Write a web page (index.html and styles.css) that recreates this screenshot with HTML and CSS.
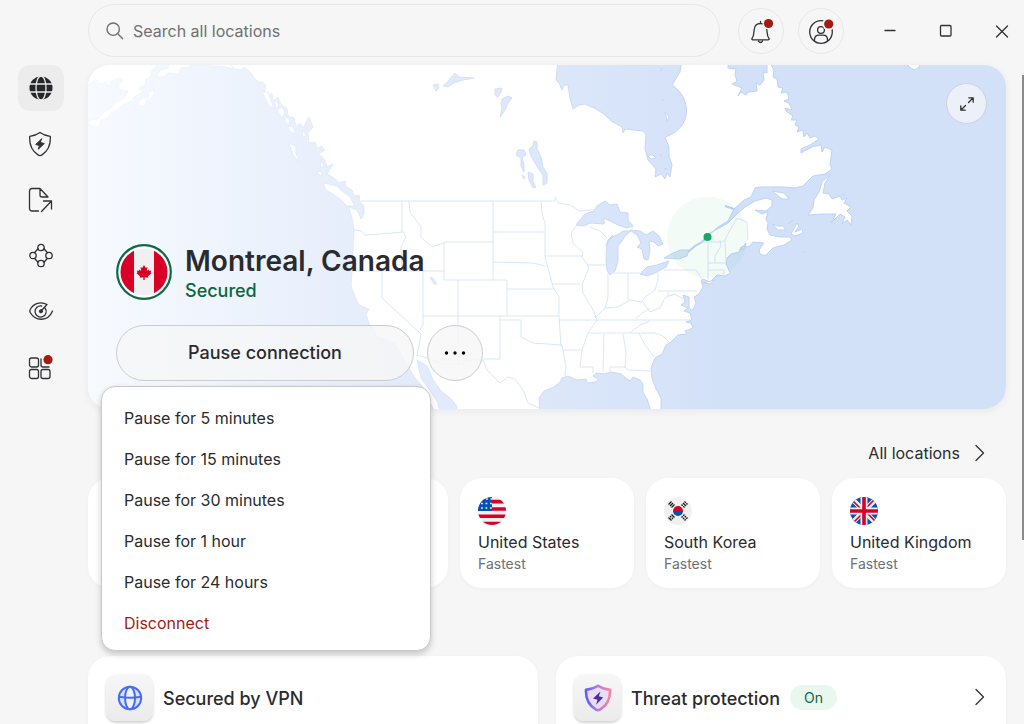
FILE: index.html
```html
<!DOCTYPE html>
<html lang="en">
<head>
  <meta charset="utf-8" />
  <meta name="viewport" content="width=device-width, initial-scale=1" />
  <title>VPN</title>
  <link rel="stylesheet" href="styles.css">
</head>
<body>
<div class="app">
<header class="topbar">
  <label class="search">
    <svg class="search-icon" width="18" height="18" viewBox="0 0 18 18"><circle cx="7.2" cy="7.2" r="6.2" /><path d="M11.8 11.8L17 17" /></svg>
    <input class="search-input" type="search" placeholder="Search all locations" aria-label="Search all locations" />
  </label>
  <div class="topbar-actions">
    <button class="round-button" type="button" aria-label="Notifications">
      <svg class="icon" width="26" height="26" viewBox="0 0 26 26">
        <path d="M12.5 3.5v2M4 20.5c2-2.5 1.8-5 2.2-9C6.600 7.500 9 5.500 12.500 5.500s5.900 2 6.300 6c.4 4 .2 6.500 2.200 9 .5.800 0 1.300-1 1.300H5c-1 0-1.500-.5-1-1.300zM10.500 23.200c1 1.700 3 1.700 4 0" />
        <circle class="icon-halo" cx="20.500" cy="5.500" r="6" />
        <circle class="icon-dot" cx="20.500" cy="5.500" r="4.600" />
      </svg>
    </button>
    <button class="round-button" type="button" aria-label="Account">
      <svg class="icon" width="26" height="26" viewBox="0 0 26 26">
        <circle cx="13" cy="14" r="11.300" /><circle cx="13" cy="12" r="3.400" />
        <path d="M6.500 22.800v-1c0-3 2-4.600 4.500-4.600h4c2.500 0 4.500 1.600 4.500 4.600v1" />
        <circle class="icon-halo" cx="20.700" cy="6" r="6.400" />
        <circle class="icon-dot" cx="20.700" cy="6" r="4.600" />
      </svg>
    </button>
  </div>
  <div class="window-controls">
    <button class="window-button" type="button" aria-label="Minimize"><svg class="icon" width="14" height="14" viewBox="0 0 14 14"><path d="M2 6.500h10" /></svg></button>
    <button class="window-button" type="button" aria-label="Maximize"><svg class="icon" width="14" height="14" viewBox="0 0 14 14"><rect x="1.500" y="1.500" width="10.500" height="10.500" rx="1" /></svg></button>
    <button class="window-button" type="button" aria-label="Close"><svg class="icon" width="14" height="14" viewBox="0 0 14 14"><path d="M1.500 2L12.500 13M12.500 2L1.500 13" /></svg></button>
  </div>
</header>

<nav class="sidebar">
  <a class="nav-link nav-link--active" href="#" aria-label="VPN">
    <svg class="icon" width="26" height="26" viewBox="0 0 26 26">
      <circle class="globe-fill" cx="13" cy="13" r="11.500" />
      <g class="globe-lines"><ellipse cx="13" cy="13" rx="5" ry="12" /><path d="M1 9h24M1 17h24" /></g>
    </svg>
  </a>
  <a class="nav-link" href="#" aria-label="Threat protection">
    <svg class="icon" width="26" height="26" viewBox="0 0 26 26">
      <path d="M12 1.500c3 2.200 6.500 3.400 10.300 3.800.5 8.300-2 14.600-8.300 18.600-1.500 1-2.500 1-4 0C3.700 19.900 1.200 13.600 1.700 5.300 5.500 4.900 9 3.700 12 1.500z" />
      <path class="icon-solid" d="M13.500 8l-5.800 5.500 3.800 1-1.200 3.700 6-5.700-3.900-1z" />
    </svg>
  </a>
  <a class="nav-link" href="#" aria-label="File sharing">
    <svg class="icon" width="26" height="26" viewBox="0 0 26 26">
      <path d="M10.500 24H4c-1.500 0-2.500-1-2.500-2.500V4c0-1.500 1-2.500 2.500-2.500h8L20 10h-6c-1.200 0-2-.8-2-2V1.500M13.500 24.500L23.500 14M15.500 14h8v8" />
    </svg>
  </a>
  <a class="nav-link" href="#" aria-label="Meshnet">
    <svg class="icon" width="26" height="26" viewBox="0 0 26 26">
      <circle cx="13" cy="4.500" r="3.200" /><circle cx="13" cy="20.500" r="3.200" /><circle cx="5" cy="12.500" r="3.200" /><circle cx="21" cy="12.500" r="3.200" />
      <path d="M10 5.800L6.700 9.500M16 5.800l3.300 3.700M10 19.200l-3.300-3.700M16 19.200l3.300-3.700" />
    </svg>
  </a>
  <a class="nav-link" href="#" aria-label="Dark web monitor">
    <svg class="icon" width="26" height="26" viewBox="0 0 26 26">
      <path d="M19 5.500C12.500 2 5.500 4.500 2.200 10.500c-.6 1-.6 2 0 3C7.500 22.500 20 23 24.500 12M19 5.500l-5.500 6M17 9a5.600 5.600 0 1 1-3.300-2" />
      <circle class="icon-solid" cx="13" cy="12.300" r="1.600" />
    </svg>
  </a>
  <a class="nav-link" href="#" aria-label="All products">
    <svg class="icon" width="26" height="26" viewBox="0 0 26 26">
      <rect x="1.500" y="3" width="9" height="9" rx="2" /><rect x="1.500" y="14.500" width="9" height="9" rx="2" /><rect x="13" y="14.500" width="9" height="9" rx="2" />
      <path d="M13 4v6c0 1.300.700 2 2 2h6" />
      <circle class="icon-halo" cx="20" cy="4.700" r="6" />
      <circle class="icon-dot" cx="20" cy="4.700" r="4.600" />
    </svg>
  </a>
</nav>

<main class="content">
  <section class="hero">
    <svg class="map" viewBox="88 65 918 344" preserveAspectRatio="xMidYMid slice" aria-hidden="true">
      <defs>
        <linearGradient id="sea" gradientUnits="userSpaceOnUse" x1="88" y1="0" x2="720" y2="0">
          <stop offset="0" stop-color="#f7faff" /><stop offset=".45" stop-color="#e5edfb" /><stop offset="1" stop-color="#d3e1f8" />
        </linearGradient>
        <linearGradient id="coast" gradientUnits="userSpaceOnUse" x1="88" y1="0" x2="720" y2="0">
          <stop offset="0" stop-color="#f3f7ff" /><stop offset=".45" stop-color="#dde8fb" /><stop offset="1" stop-color="#bdd2f6" />
        </linearGradient>
      </defs>
      <path fill="url(#sea)" d="M88 65h918v344H88z" />
      <g class="map-land">
        <!-- Alaska -->
        <path d="M80 60H158L157 66 151 71 152 76 146 79 145 85 138 88 143 92 134 97 132 101 122 105 119 109 111 113 108 118 101 120 99 126 93 127 90 124 88 126 90 120 98 119 104 112 111 108 116 102 124 98 128 91 120 90 118 85 123 81 119 78 110 82 110 88 106 82 99 84 96 79 88 85 80 85z" />
        <path d="M157 77L160 70 168 68 170 60H196L189 67 181 68 178 74 169 73 163 77zM138 102L144 97 148 99 149 92 155 90 152 98 147 101 144 106 139 106zM210 60H240V70L226 67 212 66z" />
        <!-- mainland -->
        <path d="M228 60L234 69 242 70 244 67 251 73 254 78 259 82 263 82 266 86 264 92 268 96 272 93 273 102 278 97 281 105 287 108 288 116 294 118 296 127 300 123 303 128 306 122 309 117 313 127 308 133 309 143 315 142 317 149 321 146 325 150 318 154 324 159 327 167 333 164 327 174 334 178 339 183 345 181 346 187 352 190 354 196 359 195 360 202 364 206 364 214 361 219 357 210 349 207 352 219 354 230 353 250 352 272 351 286 355 297 359 305 369 309 366 314 369 324 374 329 377 337 388 340 396 345 401 354 408 366 414 377 423 387 428 399 436 414H540L539 398 544 391 554 387 560 382 562 378 568 376 577 380 586 379 587 383 595 382 599 380 593 376 596 373 604 374 611 372 621 374 630 381 633 377 640 380 643 384 643 392 647 399 652 414H661L661 398 656 389 652 378 651 368 655 358 662 354 666 345 671 342 678 335 687 334 685 331 693 328 691 323 686 322 692 320 690 313 684 311 688 308 681 305 685 302 683 295 689 297 689 307 692 311 696 303 694 297 699 294 703 287 701 281 703 279 710 282 717 275 725 276 730 273 728 268 726 264 727 258 731 254 739 252 741 247 750 246 753 242 764 243 759 250 760 254 765 256 773 248 784 245 792 240 790 237 780 237 770 235 767 229 768 223 766 219 768 212 762 214 755 210 766 211 772 206 772 200 766 198 755 201 745 207 736 215 728 223 721 227 710 233 705 236 708 236 718 227 728 221 734 209 744 200 751 197 755 188 760 187H785L795 188 803 186 813 176 825 174 832 169 830 164 832 150 825 147 822 152 821 145 812 147 801 153 801 149 810 145 819 139 815 136 810 138 807 133 804 137 803 130 797 132 799 127 795 125 797 120 791 120 793 116 787 112 785 108 792 110 789 103 784 101 789 99 787 92 781 93 783 88 778 87 777 79 773 77 774 70 770 63V60H767L767 73 763 72 764 80 760 85 756 83 757 91 748 92 746 95 741 92 738 96 742 88 732 84 737 81 735 75 736 69 728 68V60H682L680 72 672 85C692 98 693 128 665 137L669 147 669 156 672 165 670 177 667 173 665 179 661 174 655 177 656 169 648 160 645 149 646 135 643 131 625 129 623 133 622 127 611 121 604 114 596 109 585 104 579 105 573 109 570 98 568 85H564L562 90 559 83 556 80 558 60z" />
        <!-- islands -->
        <path d="M323 183L329 184 337 186 343 192 350 197 355 206 347 206 341 200 333 194 326 190zM289 143L296 146 296 153 299 162 293 155zM262 92L268 92 270 98 274 108 269 106zM274 99L279 105 276 109zM277 110L282 107 285 112 282 118zM285 116L290 120 289 125 285 122zM288 126L293 127 296 134 290 132zM302 130L306 135 303 138zM320 160L324 165 321 168zM317 172L321 171 322 177z" />
        <path d="M831 174L825 183 823 193 829 194 832 199 840 196 842 200 847 198 844 203 851 207 847 211 852 216 851 225 847 220 842 224 845 217 840 214 831 223 836 214H823L808 215 813 208 814 200 819 192 822 182zM772 191L784 193 789 199 782 199zM772 224L777 226 783 226 786 230 778 230zM797 223L799 226 795 232 802 229 803 233 795 236 791 234zM906 60H922L919 67 915 70 909 67zM647 155L653 155 656 158 651 159zM665 112L669 117 667 121zM703 283L715 280 710 284z" />
      </g>
      <!-- inland water -->
      <g class="map-water">
        <path d="M417 360L427 366 433 380 441 391 450 398 457 406 455 414H441L437 401 429 389 421 378z" />
        <path d="M576 225L585 214 594 211 597 206 605 201 610 205 617 204 620 212 628 213 628 220 633 226 627 228 618 225 604 218 604 224 590 223 584 226zM607 244L612 237 619 234 623 231 631 231 625 236 622 241 618 246 618 261 615 271 610 275 607 270 606 260zM606 246L613 235 608 240zM630 230L640 231 646 235 653 231 659 236 663 244 658 246 654 242 649 241 650 250 648 260 644 259 642 249 637 247 641 243 637 235zM640 274L647 267 657 265 669 261 666 267 655 273 647 276zM664 258L671 254 680 250 689 250 687 256 679 259z" />
        <path d="M443 86L449 80 455 73 459 77 474 78 463 80 454 83 448 87zM433 85L438 84 439 88 436 91zM495 89L502 88 501 92 498 97 495 95zM502 99L508 96 512 98 508 103 505 110 500 117 502 108 501 103zM529 149L533 146 534 141 537 142 537 149 541 157 543 167 547 174 547 183 543 185 543 175 538 168 531 156zM516 155L518 150 524 150 526 155 522 157 524 165 524 172 521 166 521 158zM522 175L525 177 524 179zM528 172L533 174 533 182 536 187 533 188 529 180zM430 277L433 278 437 284 434 284z" />
        <path d="M746 243l-6 7 4 -1zM660 71l3-3M663 99v2M661 154v2M664 169l3 0M793 220l-5 4M803 252l2 0M842 195l3-1" />
      </g>
      <g class="map-rivers">
        <path d="M688 252L695 246 702 242 708 236M725 206L734 209" />
      </g>
      <g class="map-borders">
        <path d="M361 201H555V197L558 203 570 205 580 211 598 209 620 221 633 228M402 201V232M353 230L361 231 365 235 380 234 403 232 406 237 401 247 402 271M409 201L410 212 421 227 421 237 432 247 444 243M444 242H493M444 242V280H507V316M493 201V280M493 232H544M493 262L533 263 545 266M541 201L542 214 545 223V257L553 287 559 297V316L561 347M545 256H583M352 271H444M382 271V298L421 334 419 345 417 356M423 271V325L420 330M423 316H559M458 280V364M507 289H555M500 316V359H483M500 320H521V337L533 343 562 345 566 367 565 377M563 350H583M559 320H590M552 284L580 284M577 225L571 233 573 243 583 252 582 257 589 267 582 285 583 293 593 310 597 320 588 333 582 350 580 367H593V373M587 265H607M608 273V297L605 308M628 273V300M610 273H640M595 318L605 308 618 307 630 300 642 302 645 297 655 290 658 280V271M590 320H690M590 333H640L655 333 663 336 670 343M604 334L603 371M623 334L626 352 625 368M610 373V367H625L628 370 650 371M639 333L645 345 654 357M630 333L640 325 650 321M643 302L650 312 660 308 665 298 674 294 684 299M636 318L650 308M664 270H696L700 276 702 280M658 291H697M668 292V296L675 294M708 242V280M702 242H722L725 240M720 240L721 246 715 256V263M725 240L726 263M725 240L730 230 737 218 747 222 748 240M708 263H726M708 270H724V276M417 355L427 358 442 364H464V360H483L487 370 500 383 508 377 515 379 523 390 528 403 539 408M590 227L600 231 607 238" />
      </g>
      <circle class="map-pulse" cx="707.500" cy="237" r="40.500" />
      <circle class="map-pin" cx="707.500" cy="237" r="4" />
    </svg>
    <button class="expand-button" type="button" aria-label="Expand map">
      <svg class="icon" width="16" height="16" viewBox="0 0 16 16"><path d="M9.500 6.500L14 2M9.800 1.800h4.400v4.400M6.500 9.500L2 14M1.800 9.800v4.400h4.400" /></svg>
    </button>
    <div class="status">
      <svg class="status-flag" width="56" height="56" viewBox="0 0 56 56" role="img" aria-label="Canada">
        <circle cx="28" cy="28" r="26.800" fill="#fff" stroke="#0b6b43" stroke-width="2.200" />
        <clipPath id="ca"><circle cx="28" cy="28" r="23.500" /></clipPath>
        <g clip-path="url(#ca)">
          <path fill="#f0f0f0" d="M0 0h56v56H0z" /><path fill="#d80027" d="M0 0h18v56H0zM38 0h18v56H38z" />
          <path fill="#d80027" d="M28 21l1.800 3 1.600-.9-.6 4 2-1.700.5 1.500 2-.5-.7 2.200.9.600-3.600 3 .4 1.500-3.600-.5v2.900h-1.400v-2.900l-3.600.5.400-1.500-3.600-3 .9-.6-.7-2.200 2 .5.500-1.500 2 1.700-.6-4 1.600.9z" />
        </g>
      </svg>
      <div class="status-text">
        <h1 class="status-place">Montreal, Canada</h1>
        <p class="status-state">Secured</p>
      </div>
    </div>
    <div class="connection">
      <button class="pause-button" type="button" aria-expanded="true">Pause connection</button>
      <button class="more-button" type="button" aria-label="More options">
        <svg width="24" height="6" viewBox="0 0 24 6"><circle cx="3.500" cy="3" r="1.700" /><circle cx="12" cy="3" r="1.700" /><circle cx="20.500" cy="3" r="1.700" /></svg>
      </button>
      <div class="menu">
        <button class="menu-item" type="button">Pause for 5 minutes</button>
        <button class="menu-item" type="button">Pause for 15 minutes</button>
        <button class="menu-item" type="button">Pause for 30 minutes</button>
        <button class="menu-item" type="button">Pause for 1 hour</button>
        <button class="menu-item" type="button">Pause for 24 hours</button>
        <button class="menu-item menu-item--danger" type="button">Disconnect</button>
      </div>
    </div>
  </section>

  <a class="all-locations" href="#">All locations
    <svg class="icon" width="10" height="18" viewBox="0 0 10 18"><path d="M1 1.500L8.500 9 1 16.500" /></svg>
  </a>

  <ul class="locations">
    <li class="location"></li>
    <li class="location"></li>
    <li class="location">
      <svg class="location-flag" width="28" height="28" viewBox="0 0 28 28" aria-hidden="true">
        <clipPath id="round"><circle cx="14" cy="14" r="14" /></clipPath>
        <g clip-path="url(#round)">
          <path fill="#f0f0f0" d="M0 0h28v28H0z" />
          <path fill="#d80027" d="M0 2.800h28v3.600H0zM0 10.200h28v3.600H0zM0 17.500h28v3.600H0zM0 24.800h28v3.600H0z" />
          <path fill="#0052b4" d="M0 0h14v14H0z" />
          <path stroke="#f0f0f0" stroke-width="1.600" stroke-dasharray="1.800 2.700" d="M3 6.500h11M3 11h11M8 2h6" />
        </g>
      </svg>
      <span class="location-name">United States</span>
      <span class="location-note">Fastest</span>
    </li>
    <li class="location">
      <svg class="location-flag" width="28" height="28" viewBox="0 0 28 28" aria-hidden="true">
        <circle cx="14" cy="14" r="14" fill="#f0f0f0" />
        <path fill="#d80027" d="M9 14a5 5 0 0 1 10 0z" /><path fill="#0052b4" d="M9 14a5 5 0 0 0 10 0z" />
        <g stroke="#1a1a1a" stroke-width="1.300">
          <path d="M4.500 7.500l3-3M6 9l3-3M7.500 10.500l3-3" />
          <path d="M4.500 20.500l3 3M6 19l1.200 1.200M7.800 20.800L9 22M7.500 17.500l3 3" />
          <path d="M20.500 4.500l1.200 1.200M22.300 6.300l1.200 1.200M19 6l3 3M17.500 7.500l1.200 1.200M19.300 9.300l1.200 1.200" />
          <path d="M20.500 23.500l1.200-1.200M22.300 21.700l1.200-1.200M19 22l1.200-1.200M20.800 20.200L22 19M17.500 20.500l1.200-1.200M19.300 18.700l1.200-1.200" />
        </g>
      </svg>
      <span class="location-name">South Korea</span>
      <span class="location-note">Fastest</span>
    </li>
    <li class="location">
      <svg class="location-flag" width="28" height="28" viewBox="0 0 28 28" aria-hidden="true">
        <g clip-path="url(#round)">
          <path fill="#0052b4" d="M0 0h28v28H0z" />
          <path stroke="#f0f0f0" stroke-width="5" d="M0 0l28 28M28 0L0 28" />
          <path stroke="#d80027" stroke-width="1.600" d="M0 1l13 13M28 27L15 14M27 0L14 13M1 28l13-13" />
          <path fill="#f0f0f0" d="M10.500 0h7v28h-7zM0 10.500h28v7H0z" />
          <path fill="#d80027" d="M12.200 0h3.600v28h-3.600zM0 12.200h28v3.600H0z" />
        </g>
      </svg>
      <span class="location-name">United Kingdom</span>
      <span class="location-note">Fastest</span>
    </li>
  </ul>

  <div class="features">
    <section class="feature">
      <span class="feature-tile">
        <svg width="28" height="28" viewBox="0 0 28 28" fill="none" stroke="#466cf5" stroke-width="2" aria-hidden="true">
          <circle cx="14" cy="14" r="11.200" fill="#dbe3fb" /><ellipse cx="14" cy="14" rx="5" ry="11.200" fill="#eef2fd" /><path d="M3 12.800q11 2 22 0" />
        </svg>
      </span>
      <h2 class="feature-title">Secured by VPN</h2>
    </section>
    <section class="feature">
      <span class="feature-tile">
        <svg width="28" height="28" viewBox="0 0 28 28" aria-hidden="true">
          <linearGradient id="shield" x1="0" y1="0" x2="1" y2="0"><stop offset="0" stop-color="#5b5ff0" /><stop offset=".45" stop-color="#b07be0" /><stop offset="1" stop-color="#f585a5" /></linearGradient>
          <path fill="#eadcf3" stroke="url(#shield)" stroke-width="2.600" stroke-linejoin="round" d="M14 1.800c3.500 2.400 7.500 3.600 12 4 .4 9-2.300 15.300-10 19.800-1.500.9-2.500.9-4 0C4.300 21.100 1.600 14.800 2 5.800c4.500-.4 8.500-1.600 12-4z" />
          <path fill="#47309d" d="M16.500 7.500L9 14.500l4.600 1.200-1.600 5 7.200-7.300-4.400-1.200z" />
        </svg>
      </span>
      <h2 class="feature-title">Threat protection</h2>
      <span class="badge">On</span>
      <a class="feature-link" href="#" aria-label="Open threat protection">
        <svg class="icon" width="10" height="18" viewBox="0 0 10 18"><path d="M1 1.500L8.500 9 1 16.500" /></svg>
      </a>
    </section>
  </div>
</main>
<div class="scrollbar"></div>
</div>
</body>
</html>
```

FILE: styles.css
```css
:root {
  --page: #f6f6f6;
  --card: #fff;
  --text: #2a2b2e;
  --muted: #6f7072;
  --line: #e7e7e8;
  --green: #0b6640;
  --red: #a31b12;
}
* {
  box-sizing: border-box;
}
html,
body {
  height: 100%;
}
body {
  margin: 0;
  background: var(--page);
  color: var(--text);
  font-family: Inter, sans-serif;
  font-size: 16px;
  line-height: 22px;
  overflow: hidden;
}
button {
  padding: 0;
  border: 0;
  background: none;
  color: inherit;
  font: inherit;
  cursor: pointer;
}
a {
  color: inherit;
  text-decoration: none;
}
svg {
  display: block;
}
h1,
h2,
p {
  margin: 0;
}

.app {
  position: relative;
  display: grid;
  grid-template-columns: 88px 1fr;
  grid-template-rows: 65px 1fr;
  height: 100%;
}

/* icons */
.icon {
  fill: none;
  stroke: #303134;
  stroke-width: 1.3;
  stroke-linecap: round;
  stroke-linejoin: round;
}
.icon-dot {
  fill: var(--red);
  stroke: none;
}
.icon-halo {
  fill: var(--page);
  stroke: none;
}
.icon-solid {
  fill: #303134;
  stroke-width: 1;
}
.globe-fill {
  fill: #26272a;
  stroke: none;
}
.globe-lines {
  stroke: #ececec;
}

/* top bar */
.topbar {
  grid-column: 2;
  display: flex;
  align-items: center;
  height: 61px;
}
.search {
  flex: 1;
  display: flex;
  align-items: center;
  gap: 9px;
  height: 53px;
  padding: 0 17px;
  border: 1px solid var(--line);
  border-radius: 27px;
}
.search-icon {
  fill: none;
  stroke: var(--muted);
  stroke-width: 1.4;
}
.search-input {
  flex: 1;
  min-width: 0;
  padding: 0;
  border: 0;
  outline: 0;
  background: none;
  color: inherit;
  font: inherit;
}
.search-input::placeholder {
  color: var(--muted);
  opacity: 1;
}
.topbar-actions {
  display: flex;
  gap: 14px;
  margin-left: 18px;
}
.round-button {
  display: grid;
  place-items: center;
  width: 46px;
  height: 46px;
  border: 1px solid var(--line);
  border-radius: 50%;
}
.window-controls {
  display: flex;
  gap: 12px;
  margin-left: 24px;
}
.window-button {
  display: grid;
  place-items: center;
  width: 44px;
  height: 32px;
}

/* sidebar */
.sidebar {
  grid-column: 1;
  grid-row: 2;
  display: flex;
  flex-direction: column;
  gap: 10px;
  padding-left: 18px;
}
.nav-link {
  display: grid;
  place-items: center;
  width: 46px;
  height: 46px;
  border-radius: 12px;
}
.nav-link--active {
  background: #ececec;
}

/* content */
.content {
  grid-column: 2;
  grid-row: 2;
  min-width: 0;
  padding-right: 18px;
}
.hero {
  position: relative;
  display: flex;
  flex-direction: column;
  justify-content: flex-end;
  min-height: 344px;
  padding: 28px;
  border-radius: 22px;
  box-shadow: 0 2px 8px rgba(0, 0, 0, .06);
}
.map {
  position: absolute;
  top: 0;
  left: 0;
  width: 100%;
  height: 100%;
  border-radius: 22px;
}
.map-land {
  fill: #fff;
  stroke: url(#coast);
  stroke-width: 1;
  stroke-linejoin: round;
}
.map-water {
  fill: url(#sea);
  stroke: url(#coast);
  stroke-linejoin: round;
}
.map-rivers {
  fill: none;
  stroke: #bdd2f6;
  stroke-width: 2;
}
.map-borders {
  fill: none;
  stroke: #dbe6fb;
  stroke-width: 1;
}
.map-pulse {
  fill: #1aa866;
  fill-opacity: .05;
}
.map-pin {
  fill: #17a964;
}
.expand-button {
  position: absolute;
  top: 18px;
  right: 19px;
  display: grid;
  place-items: center;
  width: 41px;
  height: 41px;
  border: 1px solid #d0d1d6;
  border-radius: 50%;
  background: #ecf0f9;
}
.status {
  position: relative;
  display: flex;
  align-items: center;
  gap: 13px;
  margin-bottom: 21px;
}
.status-text {
  padding-top: 4px;
}
.status-place {
  font-size: 28px;
  font-weight: 600;
  line-height: 34px;
}
.status-state {
  color: var(--green);
  font-size: 18px;
  font-weight: 500;
  line-height: 26px;
}
.connection {
  position: relative;
  display: flex;
  gap: 13px;
}
.pause-button,
.more-button {
  height: 56px;
  border: 1px solid #cbccce;
  border-radius: 28px;
  background: rgba(246, 246, 246, .8);
}
.pause-button {
  width: 298px;
  font-size: 18px;
  font-weight: 500;
}
.more-button {
  display: grid;
  place-items: center;
  width: 56px;
}
.menu {
  position: absolute;
  top: 61px;
  left: -15px;
  z-index: 1;
  display: flex;
  flex-direction: column;
  width: 330px;
  padding: 10px 0 7px;
  border: 1px solid #c9c9ca;
  border-radius: 14px;
  background: var(--card);
  box-shadow: 0 3px 6px rgba(0, 0, 0, .2);
}
.menu-item {
  height: 41px;
  padding: 0 22px;
  text-align: left;
}
.menu-item--danger {
  color: var(--red);
}

.all-locations {
  display: flex;
  align-items: center;
  gap: 15px;
  width: fit-content;
  margin: 33px 21px 14px auto;
}
.locations {
  display: grid;
  grid-template-columns: repeat(5, 1fr);
  gap: 12px;
  margin: 0;
  padding: 0;
  list-style: none;
}
.location {
  display: flex;
  flex-direction: column;
  min-height: 110px;
  padding: 19px 18px 13px;
  border-radius: 22px;
  background: var(--card);
  box-shadow: 0 1px 4px rgba(0, 0, 0, .03);
}
.location-flag {
  margin-bottom: 6px;
}
.location-note {
  color: var(--muted);
  font-size: 14px;
}
.features {
  display: grid;
  grid-template-columns: repeat(2, 1fr);
  gap: 18px;
  margin-top: 68px;
}
.feature {
  display: flex;
  align-items: flex-start;
  gap: 10px;
  min-height: 120px;
  padding: 18px;
  border-radius: 22px;
  background: var(--card);
  box-shadow: 0 1px 4px rgba(0, 0, 0, .03);
}
.feature-tile {
  display: grid;
  place-items: center;
  width: 47px;
  height: 47px;
  border-radius: 10px;
  background: linear-gradient(#f7f7f7, #ebebeb);
  box-shadow: 0 2px 3px rgba(0, 0, 0, .18);
}
.feature-title {
  font-size: 18px;
  font-weight: 500;
  line-height: 49px;
}
.badge {
  margin-top: 11px;
  padding: 0 14px;
  border-radius: 13px;
  background: #e9f8ef;
  color: var(--green);
  font-size: 14px;
  line-height: 25px;
}
.feature-link {
  margin: 14px 3px 0 auto;
}
.scrollbar {
  position: absolute;
  top: 75px;
  right: 0;
  width: 2px;
  height: 465px;
  background: #8b8b8b;
}
```
